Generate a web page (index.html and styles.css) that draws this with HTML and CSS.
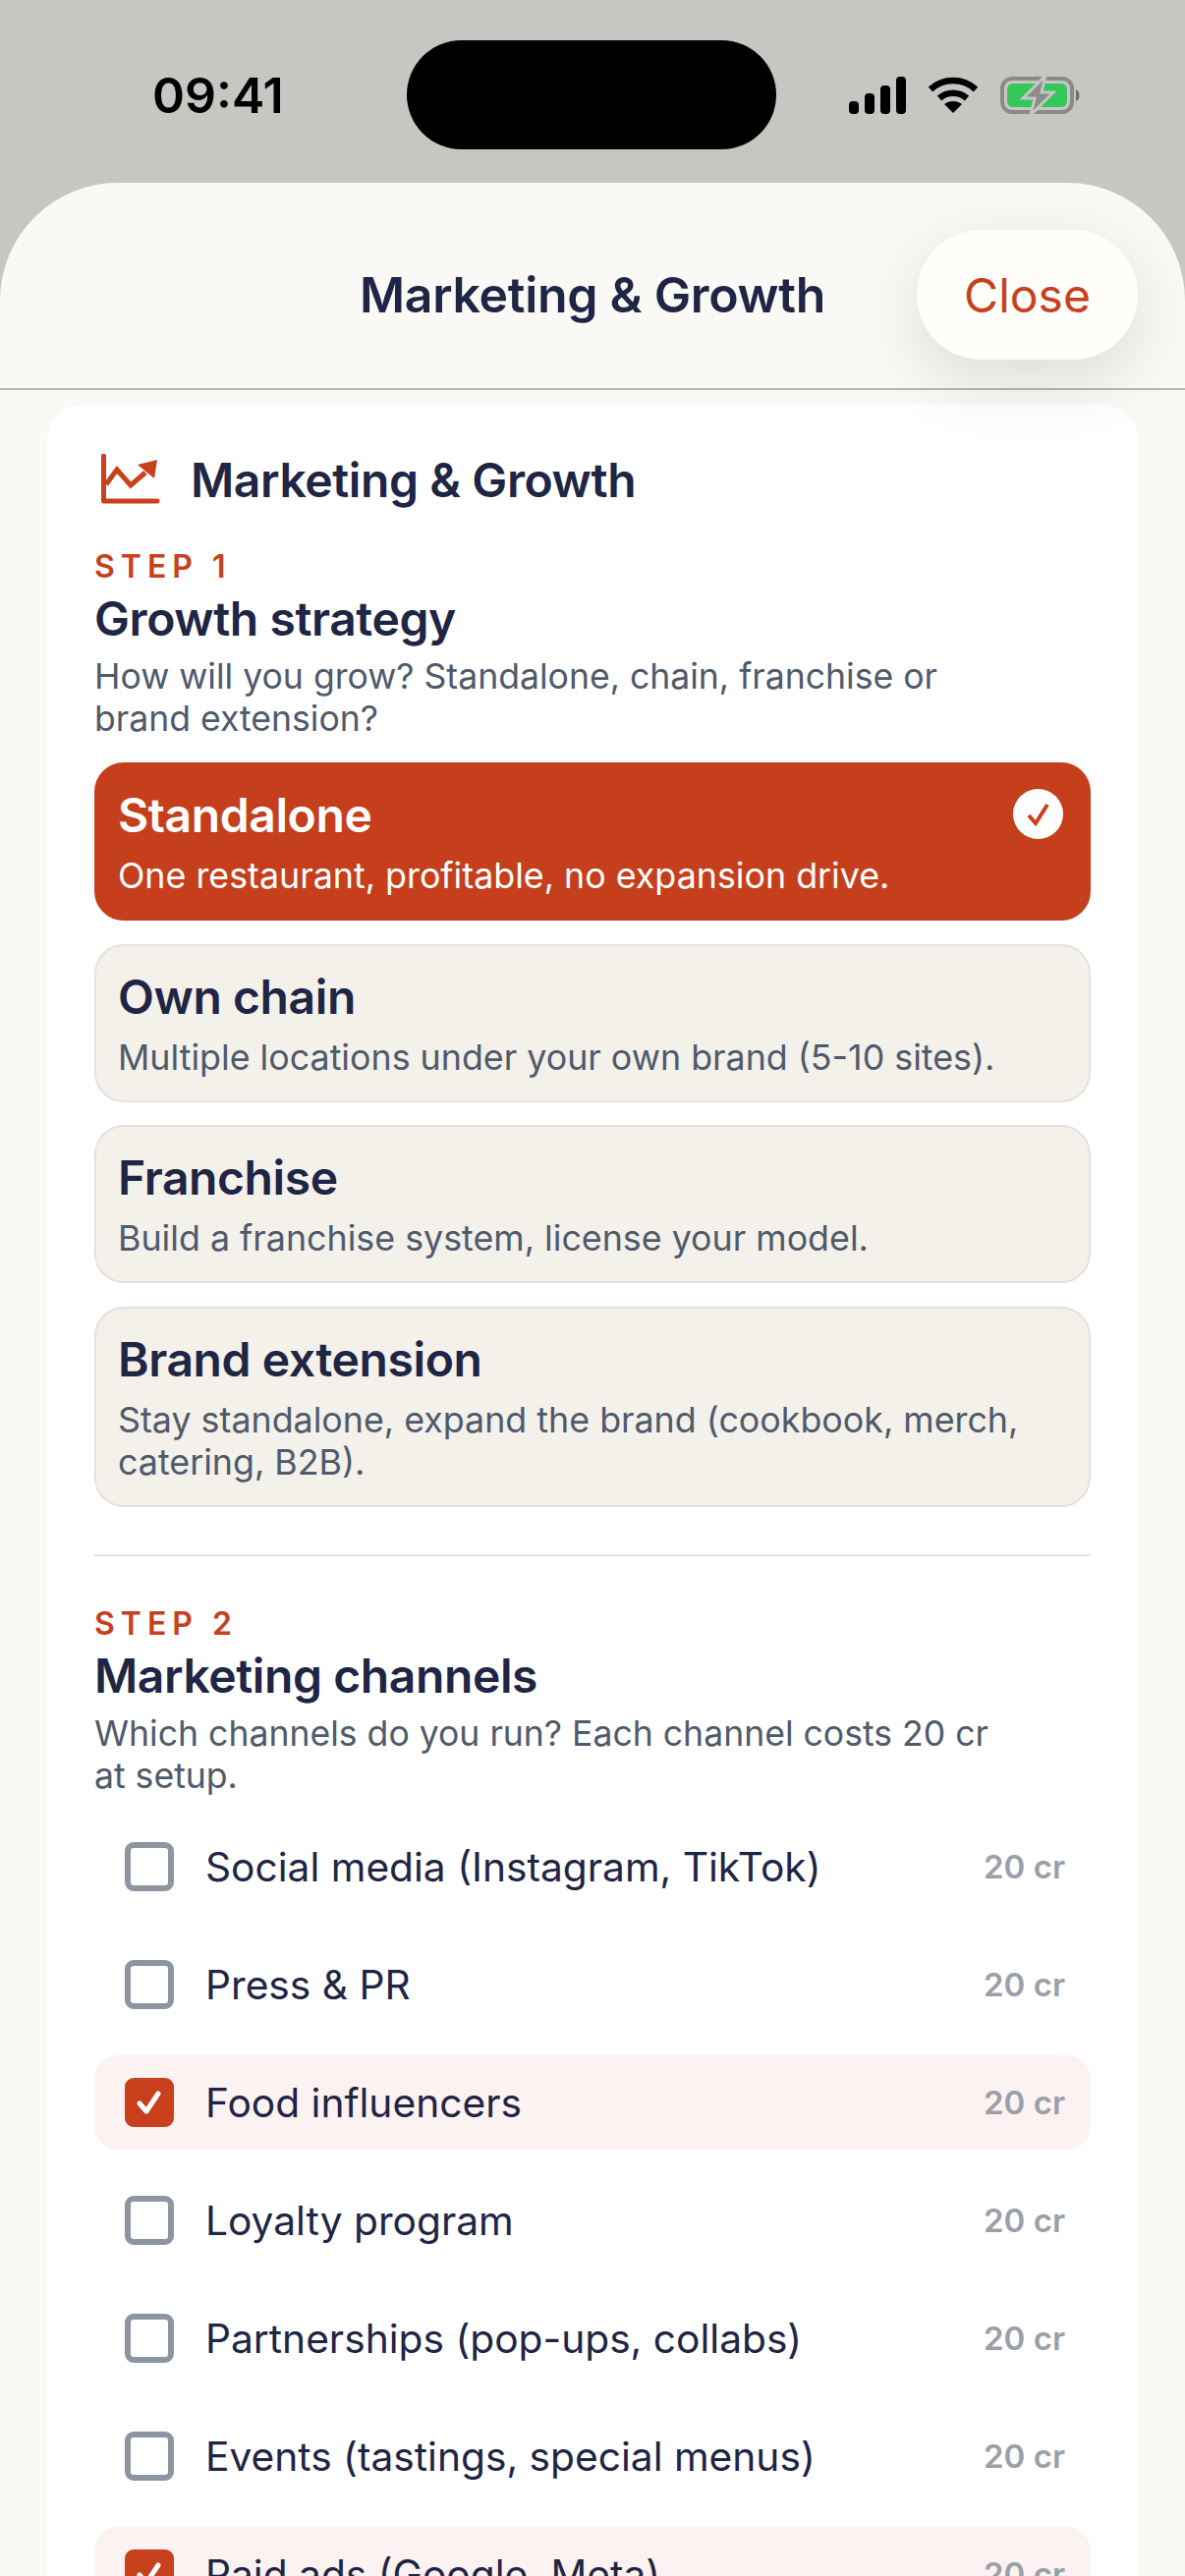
FILE: index.html
```html
<!DOCTYPE html>
<html lang="en">
<head>
    <meta charset="UTF-8" />
    <title>Marketing &amp; Growth</title>
    <link rel="stylesheet" href="styles.css">
</head>
<body>
    <!-- Status bar -->
    <div class="status-bar">
        <span class="time">09:41</span>
        <div class="island"></div>
        <div class="status-icons">
            <svg width="58" height="38" viewBox="0 0 58 38" fill="#000">
                <rect x="0" y="25" width="10" height="13" rx="4"/>
                <rect x="16" y="17" width="10" height="21" rx="4"/>
                <rect x="32" y="9" width="10" height="29" rx="4"/>
                <rect x="48" y="0" width="10" height="38" rx="4"/>
            </svg>
            <svg width="52" height="38" viewBox="0 0 52 38" fill="none" stroke="#000" stroke-width="6.500">
                <path d="M3 13 C16 1 36 1 49 13"/>
                <path d="M12 22 C20 15 32 15 40 22"/>
                <path d="M17 28 L26 37 L35 28 C30 24 22 24 17 28 Z" fill="#000" stroke="none"/>
            </svg>
            <svg width="82" height="40" viewBox="0 0 82 40">
                <rect x="2" y="3" width="71" height="34" rx="10" fill="none" stroke="#8a8a88" stroke-width="4"/>
                <rect x="7" y="8" width="61" height="24" rx="6" fill="#34c759"/>
                <path d="M77 14 C81 15 82 25 77 26 Z" fill="#6e6e6c"/>
                <path d="M46 0 L23 23 L35 23 L31 40 L54 17 L42 17 Z" fill="#8c8c8a" stroke="#c7c6c3" stroke-width="3"/>
            </svg>
        </div>
    </div>

    <div class="sheet">
        <div class="sheet-header">
            <h1 class="sheet-title">Marketing &amp; Growth</h1>
            <button class="close-btn">Close</button>
        </div>

        <div class="card">
            <div class="card-head">
                <svg width="60" height="52" viewBox="0 0 60 52" fill="none" stroke="#c8401c" stroke-width="5">
                    <path d="M2.500 2 V48 H57" stroke-linecap="round" stroke-linejoin="round"/>
                    <path d="M5 31 L16 16 L30 32 L45 19"/>
                    <path d="M37 11 L57 6 L54 25 Z" fill="#c8401c" stroke="none"/>
                </svg>
                <h2>Marketing &amp; Growth</h2>
            </div>

            <!-- Step 1 -->
            <div class="step-label">STEP 1</div>
            <h3 class="step-title">Growth strategy</h3>
            <p class="step-desc">How will you grow? Standalone, chain, franchise or brand extension?</p>

            <div class="options">
                <div class="option selected">
                    <div class="option-title">Standalone</div>
                    <div class="option-text">One restaurant, profitable, no expansion drive.</div>
                    <span class="option-check">
                        <svg width="26" height="26" viewBox="0 0 26 26" fill="none" stroke="#c8401c" stroke-width="4">
                            <path d="M3 14 L10 22 L22 3"/>
                        </svg>
                    </span>
                </div>
                <div class="option">
                    <div class="option-title">Own chain</div>
                    <div class="option-text">Multiple locations under your own brand (5-10 sites).</div>
                </div>
                <div class="option">
                    <div class="option-title">Franchise</div>
                    <div class="option-text">Build a franchise system, license your model.</div>
                </div>
                <div class="option">
                    <div class="option-title">Brand extension</div>
                    <div class="option-text">Stay standalone, expand the brand (cookbook, merch, catering, B2B).</div>
                </div>
            </div>

            <hr class="divider">

            <!-- Step 2 -->
            <div class="step-label step-two">STEP 2</div>
            <h3 class="step-title">Marketing channels</h3>
            <p class="step-desc">Which channels do you run? Each channel costs 20 cr at setup.</p>

            <div class="channels">
                <div class="channel"><span class="box"></span><span class="channel-name">Social media (Instagram, TikTok)</span><span class="cost">20 cr</span></div>
                <div class="channel"><span class="box"></span><span class="channel-name">Press &amp; PR</span><span class="cost">20 cr</span></div>
                <div class="channel on">
                    <span class="box"><svg width="28" height="28" viewBox="0 0 28 28" fill="none" stroke="#fff" stroke-width="5" stroke-linecap="round" stroke-linejoin="round"><path d="M4 15 L11 23 L23 5"/></svg></span>
                    <span class="channel-name">Food influencers</span><span class="cost">20 cr</span>
                </div>
                <div class="channel"><span class="box"></span><span class="channel-name">Loyalty program</span><span class="cost">20 cr</span></div>
                <div class="channel"><span class="box"></span><span class="channel-name">Partnerships (pop-ups, collabs)</span><span class="cost">20 cr</span></div>
                <div class="channel"><span class="box"></span><span class="channel-name">Events (tastings, special menus)</span><span class="cost">20 cr</span></div>
                <div class="channel on">
                    <span class="box"><svg width="28" height="28" viewBox="0 0 28 28" fill="none" stroke="#fff" stroke-width="5" stroke-linecap="round" stroke-linejoin="round"><path d="M4 15 L11 23 L23 5"/></svg></span>
                    <span class="channel-name">Paid ads (Google, Meta)</span><span class="cost">20 cr</span>
                </div>
            </div>
        </div>
    </div>
</body>
</html>
```

FILE: styles.css
```css
/* Basic reset and background */
html, body {
    height: 2622px;
    overflow: hidden;
}

body {
    font-family: Inter, "Liberation Sans", sans-serif;
    margin: 0;
    padding: 0;
    background: #c7c6c3;
    color: #1f2544;
}

/* Status bar */
.status-bar {
    height: 186px;
    display: flex;
    align-items: flex-start;
    box-sizing: border-box;
    padding: 41px 106px 0 155px;
}

.time {
    font-size: 50px;
    font-weight: 600;
    line-height: 112px;
    color: #000;
    width: 133px;
    margin-right: 126px;
    white-space: nowrap;
}

.island {
    width: 376px;
    height: 111px;
    border-radius: 56px;
    background: #000;
}

.status-icons {
    display: flex;
    align-items: center;
    gap: 22px;
    height: 112px;
    margin-left: auto;
}

/* Sheet */
.sheet {
    background: #faf9f6;
    border-radius: 120px 120px 0 0;
    height: 2436px;
    overflow: hidden;
}

.sheet-header {
    height: 211px;
    box-sizing: border-box;
    padding-top: 18px;
    border-bottom: 2px solid #b9b7b2;
    display: flex;
    align-items: center;
    justify-content: center;
    position: relative;
}

.sheet-title {
    margin: 0;
    font-size: 50px;
    font-weight: 600;
    letter-spacing: -0.300px;
}

.close-btn {
    position: absolute;
    right: 48px;
    top: 48px;
    width: 225px;
    height: 132px;
    border: none;
    border-radius: 66px;
    background: #fffefb;
    color: #c8401c;
    font-family: inherit;
    font-size: 48px;
    box-shadow: 0 20px 70px rgba(0, 0, 0, 0.12);
}

/* Card */
.card {
    margin: 15px 48px 0;
    padding: 48px 48px 0;
    background: #fff;
    border-radius: 36px;
}

.card-head {
    display: flex;
    align-items: center;
    gap: 31px;
    padding-left: 7px;
    height: 56px;
}

.card-head h2 {
    margin: 0;
    font-size: 48px;
    font-weight: 600;
    letter-spacing: -0.400px;
}

.step-label {
    margin-top: 41px;
    font-size: 32px;
    line-height: 40px;
    font-weight: 600;
    letter-spacing: 6px;
    color: #c8401c;
}

.step-two {
    margin-top: 49px;
}

.step-title {
    margin: 4px 0 0;
    font-size: 48px;
    line-height: 58px;
    font-weight: 600;
    letter-spacing: -0.400px;
}

.step-desc {
    margin: 8px 0 0;
    padding-right: 72px;
    font-size: 35.600px;
    line-height: 43px;
    color: #4f5a6b;
}

/* Options */
.options {
    margin-top: 23px;
    display: flex;
    flex-direction: column;
    gap: 23.500px;
}

.option {
    position: relative;
    padding: 23px 22px 22px;
    border: 2px solid #e5e1dc;
    border-radius: 30px;
    background: #f4f0ea;
}

.option-title {
    font-size: 48px;
    line-height: 58px;
    font-weight: 600;
    letter-spacing: -0.400px;
}

.option-text {
    margin-top: 11px;
    font-size: 35.800px;
    line-height: 43px;
    color: #4f5a6b;
}

.option.selected {
    background: #c53f1c;
    border-color: #c53f1c;
    color: #fff;
}

.option.selected .option-text {
    color: #fff;
}

.option-check {
    position: absolute;
    top: 25px;
    right: 26px;
    width: 51px;
    height: 51px;
    border-radius: 50%;
    background: #fff;
    display: flex;
    align-items: center;
    justify-content: center;
}

.divider {
    margin: 48.500px 0 0;
    border: none;
    border-top: 2px solid #e5e3df;
}

/* Channels */
.channels {
    margin-top: 23px;
    display: flex;
    flex-direction: column;
    gap: 24px;
}

.channel {
    height: 96px;
    display: flex;
    align-items: center;
    padding: 0 26px 0 31px;
    border-radius: 24px;
}

.channel.on {
    background: #fcf2f1;
}

.box {
    width: 50px;
    height: 50px;
    box-sizing: border-box;
    border: 6px solid #8d95a2;
    border-radius: 9px;
    background: #fff;
    display: flex;
    align-items: center;
    justify-content: center;
    flex-shrink: 0;
}

.channel.on .box {
    background: #c8401c;
    border: none;
}

.channel-name {
    margin-left: 32px;
    flex: 1;
    font-size: 40.700px;
}

.cost {
    font-size: 33px;
    font-weight: 600;
    color: #9a9fa9;
}
```
